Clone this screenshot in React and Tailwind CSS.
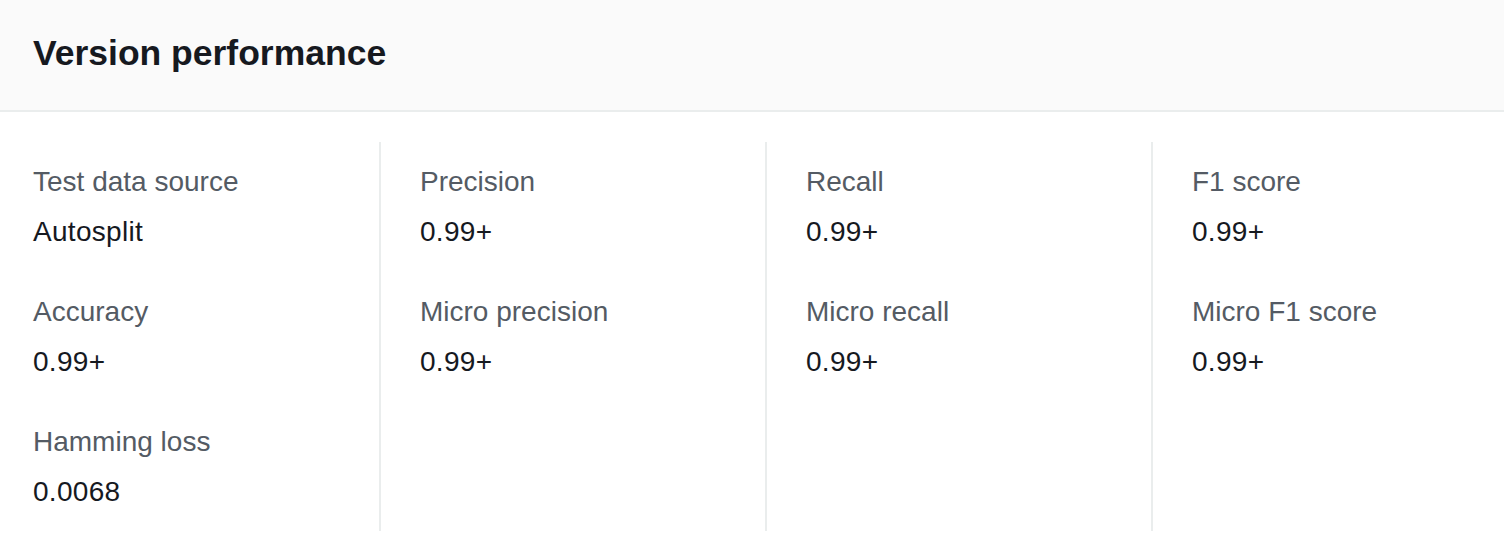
const columns = [
  [
    ['Test data source', 'Autosplit'],
    ['Accuracy', '0.99+'],
    ['Hamming loss', '0.0068'],
  ],
  [
    ['Precision', '0.99+'],
    ['Micro precision', '0.99+'],
  ],
  [
    ['Recall', '0.99+'],
    ['Micro recall', '0.99+'],
  ],
  [
    ['F1 score', '0.99+'],
    ['Micro F1 score', '0.99+'],
  ],
]

const colWidth = ['w-[346px]', 'w-[386px] border-l-2 pl-[39px]', 'w-[386px] border-l-2 pl-[39px]', 'flex-1 border-l-2 pl-[39px]']

export default function App() {
  return (
    <div className="w-[1504px] h-[554px] bg-white font-['Liberation_Sans',Arial,sans-serif] overflow-hidden">
      <div className="h-[112px] bg-[#fafafa] border-b-2 border-[#eaeded] px-[33px] flex items-center">
        <h2 className="text-[35.5px] leading-[44px] font-bold text-[#16191f] -mt-[5px]">Version performance</h2>
      </div>

      <div className="px-[33px] pt-[30px] flex">
        {columns.map((items, i) => (
          <div key={i} className={`${colWidth[i]} border-[#eaeded] pt-[18px] pb-[17px] flex flex-col gap-[36px]`}>
            {items.map(([label, value]) => (
              <div key={label}>
                <div className="text-[28px] leading-[44px] text-[#545b64] mb-[6px]">{label}</div>
                <div className="text-[28px] leading-[44px] text-[#16191f] tracking-[0.3px]">{value}</div>
              </div>
            ))}
          </div>
        ))}
      </div>
    </div>
  )
}
